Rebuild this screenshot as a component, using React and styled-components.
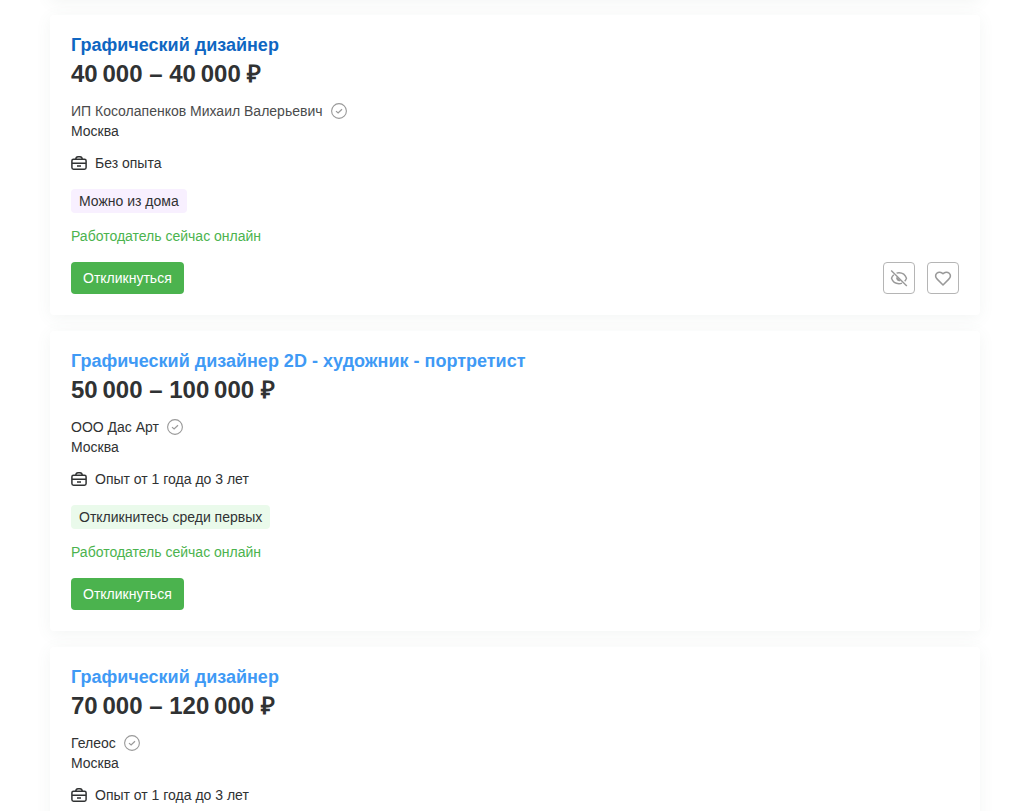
import React from 'react'
import styled, { createGlobalStyle } from 'styled-components'

let GlobalStyle = createGlobalStyle`
  body {
    margin: 0;
    background-color: #ffffff;
    color: #303233;
    font-family: "Liberation Sans", Arial, sans-serif;
    font-size: 14px;
    line-height: 20px;
  }
`
let Page = styled.main`
  height: 100vh;
  overflow: hidden;
  padding: 0 36px 0 50px;
`
let List = styled.div`
  display: flex;
  flex-direction: column;
  gap: 16px;
  margin-top: -41px;
`
let Card = styled.article`
  box-sizing: border-box;
  flex-shrink: 0;
  min-height: 40px;
  padding: 19px 21px 21px;
  border-radius: 4px;
  background-color: #ffffff;
  box-shadow: 0 3px 16px rgba(80, 110, 105, 0.07);
`
let Title = styled.h2`
  margin: 0;
  font-size: 18px;
  line-height: 22px;
`
let TitleLink = styled.a`
  color: ${props => (props.$active ? '#0f66c2' : '#3f9af5')};
  text-decoration: none;
`
let Salary = styled.p`
  margin: 4px 0 0;
  font-size: 24px;
  font-weight: bold;
  line-height: 28px;
`
let Company = styled.div`
  display: flex;
  align-items: center;
  gap: 8px;
  margin-top: 13px;
`
let CompanyLink = styled.a`
  color: ${props => (props.$active ? '#4a4b4c' : '#303233')};
  text-decoration: none;
`
let Experience = styled.div`
  display: flex;
  align-items: center;
  gap: 8px;
  margin-top: 12px;
`
let Tag = styled.span`
  display: inline-block;
  margin-top: 16px;
  padding: 2px 8px;
  border-radius: 4px;
  background-color: ${props => (props.$green ? '#eafaeb' : '#f8f0ff')};
`
let Online = styled.p`
  margin: 13px 0 0;
  color: #4bb34e;
`
let Actions = styled.div`
  display: flex;
  justify-content: space-between;
  margin-top: 16px;
`
let BtnGroup = styled.div`
  display: flex;
  gap: 12px;
`
let Btn = styled.button`
  height: 32px;
  padding: 0 12px;
  border: none;
  border-radius: 4px;
  background-color: #4bb34e;
  color: #ffffff;
  font-family: inherit;
  font-size: 14px;
`
let IconBtn = styled.button`
  display: flex;
  align-items: center;
  justify-content: center;
  width: 32px;
  height: 32px;
  padding: 0;
  border: 1px solid #b5b5b5;
  border-radius: 4px;
  background-color: #ffffff;
  color: #999999;
`

let CheckIcon = () => (
  <svg width="16" height="16" viewBox="0 0 16 16" fill="none" stroke="#999999" aria-hidden="true">
    <circle cx="8" cy="8" r="7.4" strokeWidth="1.1" />
    <path d="M5 8.1l2.1 1.9L11 6.2" strokeWidth="1.2" />
  </svg>
)

let CaseIcon = () => (
  <svg width="16" height="16" viewBox="0 0 16 16" fill="none" stroke="#303233" strokeWidth="1.5" aria-hidden="true">
    <rect x="0.9" y="4.2" width="14.2" height="10" rx="1.6" />
    <path d="M4.8 4Q5 1.7 7 1.7h2q2 0 2.2 2.3M1 8.3h14M6 11.1h4" />
  </svg>
)

let HideIcon = () => (
  <svg width="18" height="18" viewBox="0 0 18 18" fill="none" stroke="currentColor" strokeWidth="1.4" aria-hidden="true">
    <path d="M6.6 4.2Q7.7 3.7 9 3.7c3.7 0 6.4 2.2 7.5 5.6q-.6 1.6-1.8 2.9M12 14.1q-1.4.6-3 .6c-3.7 0-6.4-2.1-7.5-5.4Q2.1 7.3 3.8 5.8" />
    <path d="M6.7 7.5A3 3 0 0 0 10.8 11.7z" fill="currentColor" stroke="none" />
    <path d="M1.2 1.4l15.6 15.6" />
  </svg>
)

let HeartIcon = () => (
  <svg width="18" height="18" viewBox="0 0 18 18" fill="none" stroke="currentColor" strokeWidth="1.5" strokeLinejoin="round" aria-hidden="true">
    <path d="M9 16L3.2 10.1C1.4 8.3 1.4 5.8 2.8 4.3 4.5 2.6 7.3 2.8 9 4.7c1.7-1.9 4.5-2.1 6.2-.4 1.4 1.5 1.4 4-.4 5.8z" />
  </svg>
)

let vacancies = [
  {
    id: 1,
    title: 'Графический дизайнер',
    salary: '40\u202f000 – 40\u202f000 ₽',
    company: 'ИП Косолапенков Михаил Валерьевич',
    experience: 'Без опыта',
    tag: 'Можно из дома',
    online: true,
    active: true
  },
  {
    id: 2,
    title: 'Графический дизайнер 2D - художник - портретист',
    salary: '50\u202f000 – 100\u202f000 ₽',
    company: 'ООО Дас Арт',
    experience: 'Опыт от 1 года до 3 лет',
    tag: 'Откликнитесь среди первых',
    green: true,
    online: true
  },
  {
    id: 3,
    title: 'Графический дизайнер',
    salary: '70\u202f000 – 120\u202f000 ₽',
    company: 'Гелеос',
    experience: 'Опыт от 1 года до 3 лет'
  }
]

let Vacancy = ({ item }) => (
  <Card>
    <Title>
      <TitleLink href="#" $active={item.active}>{item.title}</TitleLink>
    </Title>
    <Salary>{item.salary}</Salary>
    <Company>
      <CompanyLink href="#" $active={item.active}>{item.company}</CompanyLink>
      <CheckIcon />
    </Company>
    <div>Москва</div>
    <Experience>
      <CaseIcon />
      {item.experience}
    </Experience>
    {item.tag && <Tag $green={item.green}>{item.tag}</Tag>}
    {item.online && (
      <>
        <Online>Работодатель сейчас онлайн</Online>
        <Actions>
          <Btn type="button">Откликнуться</Btn>
          {item.active && (
            <BtnGroup>
              <IconBtn type="button" aria-label="Скрыть"><HideIcon /></IconBtn>
              <IconBtn type="button" aria-label="В избранное"><HeartIcon /></IconBtn>
            </BtnGroup>
          )}
        </Actions>
      </>
    )}
  </Card>
)

let App = () => (
  <Page>
    <GlobalStyle />
    <List>
      {/* bottom edge of the card scrolled out above */}
      <Card as="div" />
      {vacancies.map(item => <Vacancy key={item.id} item={item} />)}
    </List>
  </Page>
)

export default App
